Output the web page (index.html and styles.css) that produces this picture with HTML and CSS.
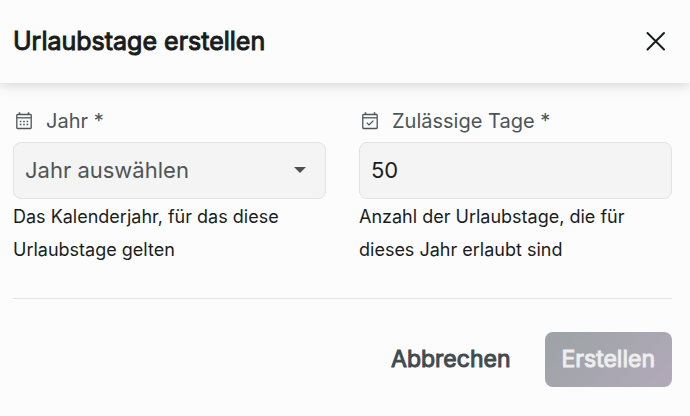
FILE: index.html
```
<!DOCTYPE html>
<html lang="de">
<head>
  <meta charset="UTF-8">
  <meta name="viewport" content="width=device-width, initial-scale=1.0">
  <title>Urlaubstage erstellen</title>
  <link rel="stylesheet" href="styles.css">
</head>
<body>
  <main class="dialog">
    <header class="dialog-header">
      <h1>Urlaubstage erstellen</h1>
      <button type="button" class="close" aria-label="Schließen">
        <svg width="20" height="20" viewBox="0 0 20 20" fill="none" stroke="currentColor" stroke-width="2" stroke-linecap="round">
          <path d="M1.5 2l16.5 16.5M18 2L1.5 18.5"/>
        </svg>
      </button>
    </header>
    <form class="dialog-form">
      <div class="fields">
        <div class="field">
          <label for="year">
            <svg class="icon" width="16" height="18" viewBox="0 0 16 18" fill="none" stroke="currentColor">
              <rect x="0.8" y="2.5" width="14.4" height="14" rx="0.8" stroke-width="1.3"/>
              <path d="M1 5.8h14" stroke-width="1.3"/>
              <path d="M3.5 0.2v2.3M12.5 0.2v2.3" stroke-width="1.5"/>
              <path d="M3.8 9.4h1.6M7.2 9.4h1.6M10.6 9.4h1.6M3.8 12.6h1.6M7.2 12.6h1.6M10.6 12.6h1.6" stroke-width="1.5"/>
            </svg>
            Jahr *
          </label>
          <div class="select-box">
            <select id="year" required>
              <option value="">Jahr auswählen</option>
              <option>2024</option>
              <option>2025</option>
              <option>2026</option>
            </select>
          </div>
          <p class="hint">Das Kalenderjahr, für das diese Urlaubstage gelten</p>
        </div>
        <div class="field">
          <label for="days">
            <svg class="icon" width="16" height="18" viewBox="0 0 16 18" fill="none" stroke="currentColor">
              <rect x="0.8" y="2.5" width="14.4" height="14" rx="0.8" stroke-width="1.3"/>
              <path d="M1 5.8h14" stroke-width="1.3"/>
              <path d="M3.5 0.2v2.3M12.5 0.2v2.3" stroke-width="1.5"/>
              <path d="M4.8 10.6l2.3 2.3L11.4 8.6" stroke-width="1.3"/>
            </svg>
            Zulässige Tage *
          </label>
          <input type="text" inputmode="numeric" id="days" value="50" required>
          <p class="hint">Anzahl der Urlaubstage, die für dieses Jahr erlaubt sind</p>
        </div>
      </div>
      <div class="actions">
        <button type="button" class="btn">Abbrechen</button>
        <button type="submit" class="btn btn-primary" disabled>Erstellen</button>
      </div>
    </form>
  </main>
</body>
</html>
```
FILE: styles.css
```
* {
  box-sizing: border-box;
}

body {
  margin: 0;
  background: #fcfcfc;
  color: #191c1d;
  font-family: Inter, "Liberation Sans", sans-serif;
}

button, input, select {
  font-family: inherit;
}

.dialog-header {
  display: flex;
  align-items: center;
  justify-content: space-between;
  height: 83px;
  padding: 0 24px 1px 13px;
  box-shadow: 0 2px 12px rgba(0, 0, 0, .17);
}

h1 {
  margin: 0;
  font-size: 25px;
  font-weight: 400;
  -webkit-text-stroke: 1px currentColor;
}

.close {
  display: flex;
  padding: 0;
  border: 0;
  background: none;
  color: #191c1d;
}

.dialog-form {
  padding: 24px 18px 29px 13px;
}

.fields {
  display: grid;
  grid-template-columns: 1fr 1fr;
  gap: 33px;
  padding-bottom: 32px;
  border-bottom: 1px solid #e1e3e3;
}

label {
  display: flex;
  align-items: center;
  gap: 14px;
  height: 28px;
  margin-bottom: 7px;
  padding-left: 3px;
  font-size: 20px;
  color: #4b5659;
}

.select-box {
  position: relative;
}

.select-box::after {
  content: "";
  position: absolute;
  top: 25px;
  right: 20px;
  border: 6px solid transparent;
  border-top-color: #4b5052;
  border-bottom: 0;
  pointer-events: none;
}

select, input {
  display: block;
  width: 100%;
  height: 57px;
  padding: 0 11px 2px;
  border: 1px solid #e1e3e3;
  border-radius: 8px;
  background: #f4f4f4;
  color: #191c1d;
  font-size: 22px;
  appearance: none;
}

select {
  color: #505455;
}

.hint {
  margin: 1px 0 0;
  font-size: 18px;
  line-height: 33px;
}

.actions {
  display: flex;
  justify-content: flex-end;
  gap: 17px;
  padding-top: 33px;
}

.btn {
  height: 55px;
  padding: 0 17px 2px;
  border: 0;
  border-radius: 8px;
  background: none;
  color: #3f4b4f;
  font-size: 23px;
  -webkit-text-stroke: 1px currentColor;
}

.btn-primary {
  background: linear-gradient(135deg, #9ca3a5, #b2a9b9);
  color: #eeeeef;
}
```
